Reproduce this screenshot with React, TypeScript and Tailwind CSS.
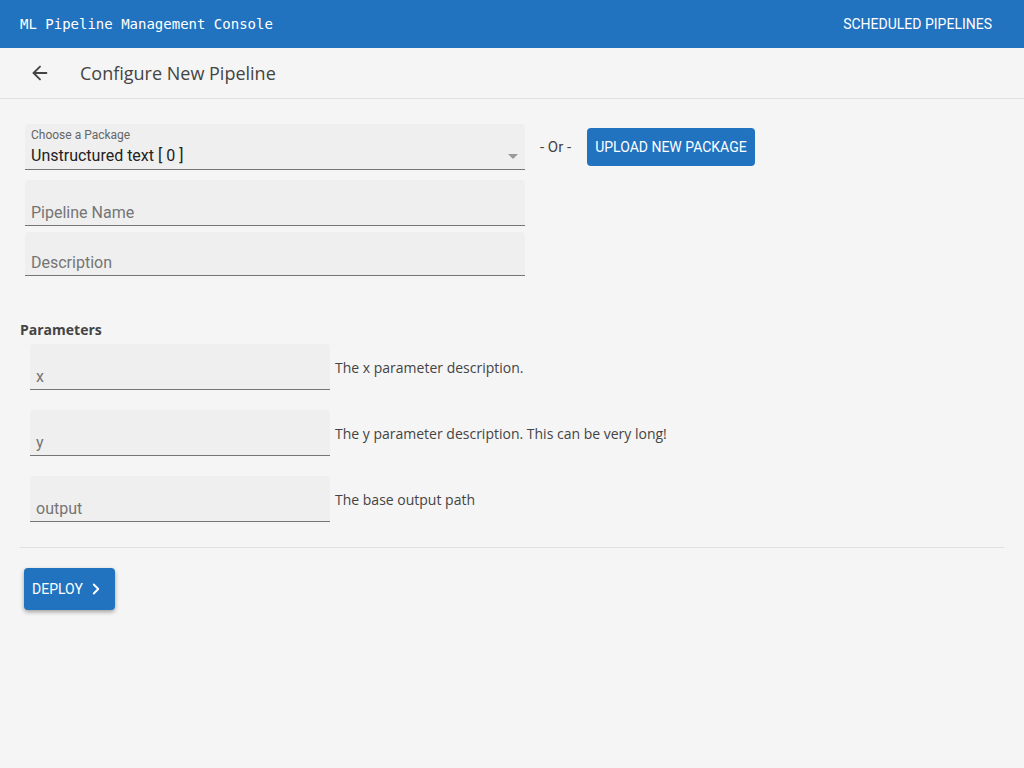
import { ArrowLeft, ChevronRight } from 'lucide-react';

const PARAMS = [
  { name: 'x', desc: 'The x parameter description.' },
  { name: 'y', desc: 'The y parameter description. This can be very long!' },
  { name: 'output', desc: 'The base output path' },
];

function Field({ label, className }: { label: string; className?: string }) {
  return (
    <div className={`shrink-0 rounded-t bg-[#efefef] border-b border-[#757575] px-[6px] flex items-end pb-0 ${className ?? ''}`}>
      <span className="text-[16px] leading-[24px] text-[#757575] font-['Roboto',sans-serif]">{label}</span>
    </div>
  );
}

export default function App() {
  return (
    <div className="min-h-[768px] bg-[#f5f5f5] font-['Open_Sans',sans-serif]">
      {/* Header */}
      <header className="h-12 bg-[#2172bf] flex items-center justify-between pl-5 pr-8">
        <span className="text-[14px] text-white font-['DejaVu_Sans_Mono',monospace]">ML Pipeline Management Console</span>
        <span className="text-[14px] text-white font-['Roboto',sans-serif]">SCHEDULED PIPELINES</span>
      </header>

      {/* Title bar */}
      <div className="h-[51px] flex items-center border-b border-[#e0e0e0]">
        <div className="w-20 flex justify-center">
          <ArrowLeft size={22} strokeWidth={2} className="text-[#444]" />
        </div>
        <h1 className="text-[18px] text-[#444]">Configure New Pipeline</h1>
      </div>

      <div className="px-5">
        {/* Package + name + desc */}
        <div className="pt-[25px] pl-[5px] flex items-start">
          <div className="w-[500px] flex flex-col">
            <div className="h-[46px] rounded-t bg-[#efefef] border-b border-[#757575] px-[6px] pt-[4px] flex flex-col font-['Roboto',sans-serif]">
              <span className="text-[12px] text-[#666] leading-[14px]">Choose a Package</span>
              <div className="mt-[3px] flex items-center justify-between">
                <span className="text-[16px] text-[#222] leading-[22px]">Unstructured text [ 0 ]</span>
                <svg width="10" height="5" viewBox="0 0 10 5" className="mr-[1px]"><path d="M0 0L5 5L10 0Z" fill="#999" /></svg>
              </div>
            </div>
            <Field label="Pipeline Name" className="mt-[10px] h-[46px]" />
            <Field label="Description" className="mt-[6px] h-[44px]" />
          </div>
          <div className="flex items-center pt-[4px]">
            <span className="ml-[15px] mr-[16px] text-[15px] text-[#444] font-['Roboto',sans-serif]">- Or -</span>
            <button className="h-[38px] px-2 rounded bg-[#2172bf] text-white text-[14px] font-['Roboto',sans-serif]">UPLOAD NEW PACKAGE</button>
          </div>
        </div>

        {/* Parameters */}
        <h2 className="mt-[43px] text-[14px] font-bold text-[#444]">Parameters</h2>
        <div className="mt-[4px] pl-[10px] flex flex-col gap-5">
          {PARAMS.map((p) => (
            <div key={p.name} className="flex items-center">
              <Field label={p.name} className="w-[300px] h-[46px]" />
              <span className="ml-[5px] text-[14px] text-[#444]">{p.desc}</span>
            </div>
          ))}
        </div>

        <div className="mt-[25px] border-t border-[#e0e0e0]" />

        <button className="mt-5 ml-1 h-[42px] pl-2 pr-[10px] rounded bg-[#2172bf] text-white text-[14px] font-['Roboto',sans-serif] flex items-center gap-1 shadow-[0_2px_4px_rgba(0,0,0,0.35)]">
          DEPLOY
          <ChevronRight size={18} strokeWidth={2.5} />
        </button>
      </div>
    </div>
  );
}
